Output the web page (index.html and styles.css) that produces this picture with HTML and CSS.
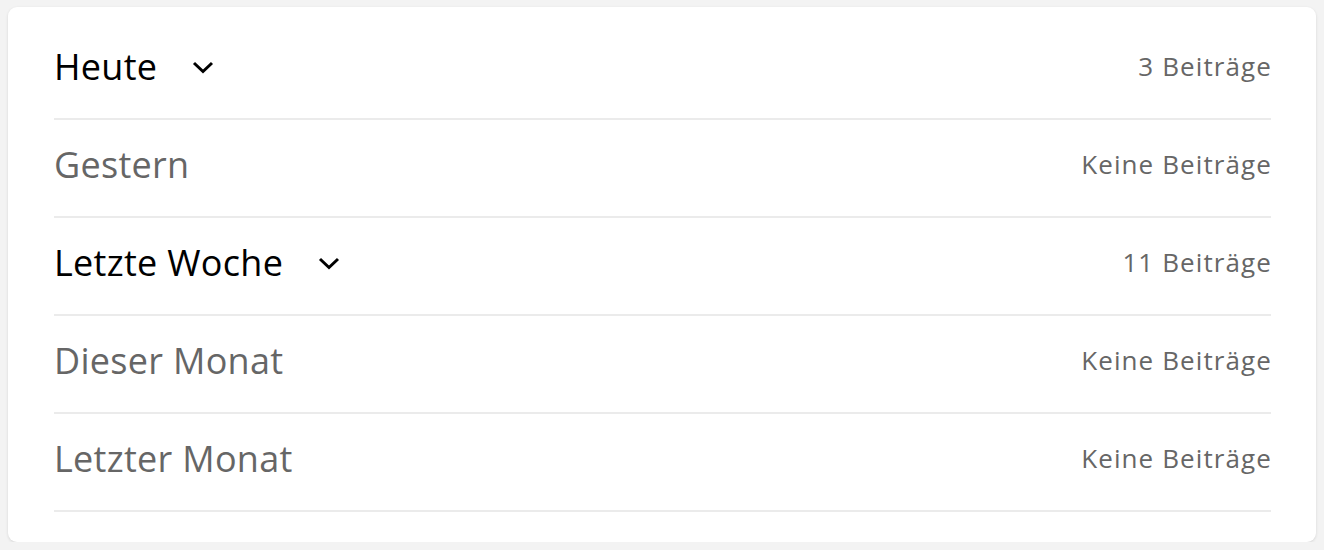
FILE: index.html
```html
<!DOCTYPE html>
<html lang="de">
<head>
<meta charset="utf-8">
<link rel="stylesheet" href="styles.css">
</head>
<body>
<div class="card">
  <div class="row">
    <div class="title open">Heute <svg class="chev" width="22" height="13" viewBox="0 0 22 13"><path d="M2 2 L11 10.5 L20 2" fill="none" stroke="#000" stroke-width="3"/></svg></div>
    <div class="count">3 Beiträge</div>
  </div>
  <div class="row">
    <div class="title">Gestern</div>
    <div class="count">Keine Beiträge</div>
  </div>
  <div class="row">
    <div class="title open">Letzte Woche <svg class="chev" width="22" height="13" viewBox="0 0 22 13"><path d="M2 2 L11 10.5 L20 2" fill="none" stroke="#000" stroke-width="3"/></svg></div>
    <div class="count">11 Beiträge</div>
  </div>
  <div class="row">
    <div class="title">Dieser Monat</div>
    <div class="count">Keine Beiträge</div>
  </div>
  <div class="row">
    <div class="title">Letzter Monat</div>
    <div class="count">Keine Beiträge</div>
  </div>
</div>
</body>
</html>
```
FILE: styles.css
```css
html, body {
  margin: 0;
  padding: 0;
  background: #f3f3f3;
}
body {
  padding: 7px 8px 0 8px;
  font-family: "Open Sans", "Noto Sans", sans-serif;
}
.card {
  background: #fff;
  border-radius: 9px;
  box-shadow: 0 1px 3px rgba(0,0,0,0.12);
  padding: 15px 45px 30px 46px;
}
.row {
  display: flex;
  align-items: center;
  justify-content: space-between;
  box-sizing: border-box;
  height: 98px;
  padding-bottom: 8px;
  border-bottom: 2px solid #ebebeb;
}
.title {
  display: flex;
  align-items: center;
  font-size: 36px;
  color: #666;
  letter-spacing: 0.3px;
}
.title.open {
  color: #000;
}
.chev {
  margin-left: 35px;
  margin-top: 2px;
}
.count {
  font-size: 26px;
  color: #666;
  letter-spacing: 1.1px;
  margin-right: -1px;
}
```
